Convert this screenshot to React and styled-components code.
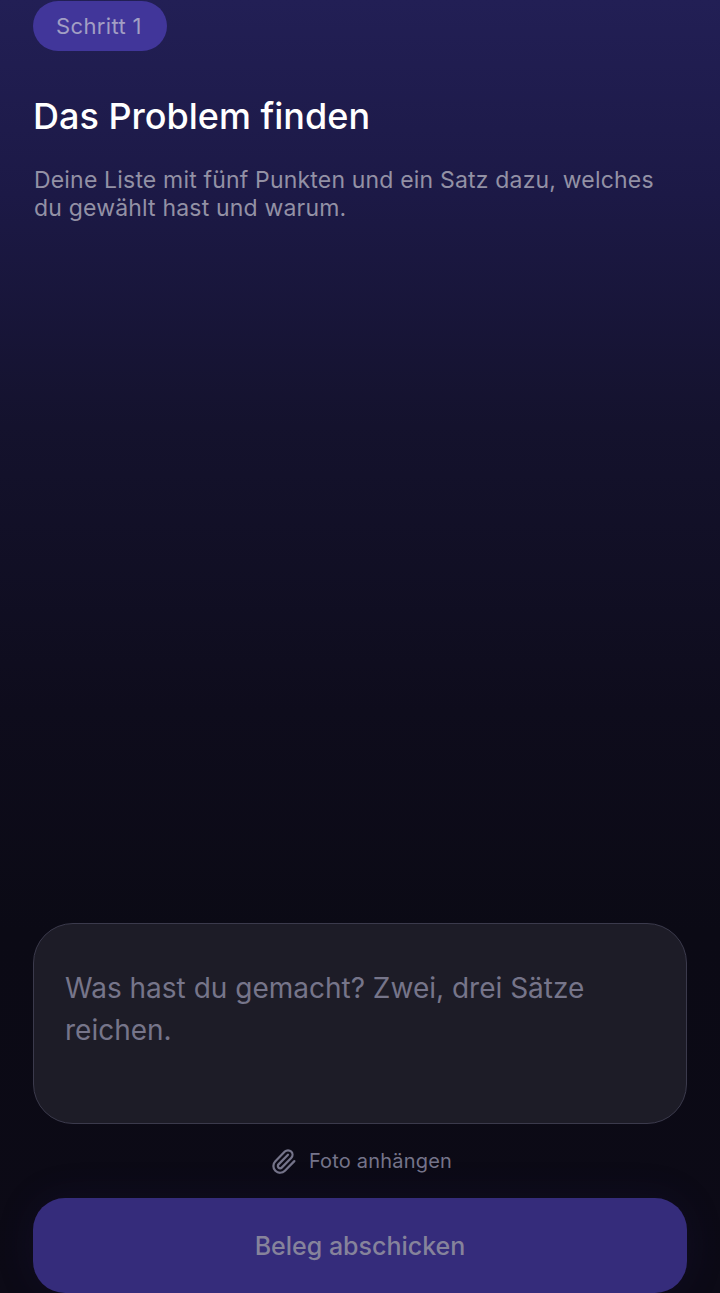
import styled, { createGlobalStyle } from 'styled-components';
import { Paperclip } from 'lucide-react';

const GlobalStyle = createGlobalStyle`
  html, body {
    margin: 0;
    padding: 0;
    background: #0b0a14;
  }
`;

const App = () => {
  return (
    <Screen>
      <GlobalStyle />
      <Intro>
        <StepPill>Schritt 1</StepPill>
        <Title>Das Problem finden</Title>
        <Description>
          Deine Liste mit fünf Punkten und ein Satz dazu, welches du gewählt hast und warum.
        </Description>
      </Intro>
      <Form>
        <Note placeholder="Was hast du gemacht? Zwei, drei Sätze reichen." />
        <Attach>
          <Paperclip size={27} strokeWidth={2} />
          Foto anhängen
        </Attach>
        <Submit>Beleg abschicken</Submit>
      </Form>
    </Screen>
  );
};

const Screen = styled.div`
  width: 720px;
  height: 1293px;
  box-sizing: border-box;
  padding: 1px 33px 0;
  overflow: hidden;
  display: flex;
  flex-direction: column;
  justify-content: space-between;
  font-family: Inter, 'Noto Sans', sans-serif;
  background: linear-gradient(180deg, #221f55 0%, #1c1946 15%, #14122d 33%, #0e0c1c 55%, #0b0a15 72%, #0c0a16 100%);
`;

const Intro = styled.header`
  display: flex;
  flex-direction: column;
  align-items: flex-start;
`;

const StepPill = styled.span`
  height: 50px;
  padding: 0 25px 0 23px;
  border-radius: 25px;
  display: flex;
  align-items: center;
  font-size: 22px;
  letter-spacing: 0.35px;
  color: #a29fc4;
  background: #41369a;
`;

const Title = styled.h1`
  margin: 44px 0 0;
  font-size: 36px;
  line-height: 42px;
  font-weight: 500;
  color: #ffffff;
`;

const Description = styled.p`
  margin: 29px 0 0;
  padding-left: 1px;
  font-size: 23px;
  line-height: 28px;
  letter-spacing: 0.18px;
  color: #9391a5;
`;

const Form = styled.div`
  display: flex;
  flex-direction: column;
  align-items: stretch;
`;

const Note = styled.textarea`
  height: 201px;
  box-sizing: border-box;
  padding: 43px 31px 0;
  border: 1.5px solid #3b3a4c;
  border-radius: 40px;
  background: #1d1c27;
  resize: none;
  outline: none;
  font-family: inherit;
  font-size: 28px;
  line-height: 42px;
  color: #e0dfe8;

  &::placeholder {
    color: #76758a;
    opacity: 1;
  }
`;

const Attach = styled.button`
  margin: 22px 0 0;
  height: 30px;
  padding: 0 0 0 2px;
  border: 0;
  background: none;
  display: flex;
  align-items: center;
  justify-content: center;
  gap: 12px;
  font-family: inherit;
  font-size: 20px;
  letter-spacing: 0.2px;
  color: #75748a;
`;

const Submit = styled.button`
  margin: 22px 0 0;
  height: 95px;
  padding: 0;
  border: 0;
  border-radius: 32px;
  background: #352c7b;
  box-shadow: 0 0 40px rgba(53, 44, 123, 0.12);
  font-family: inherit;
  font-size: 25px;
  font-weight: 500;
  color: #86839b;
`;

export default App;
